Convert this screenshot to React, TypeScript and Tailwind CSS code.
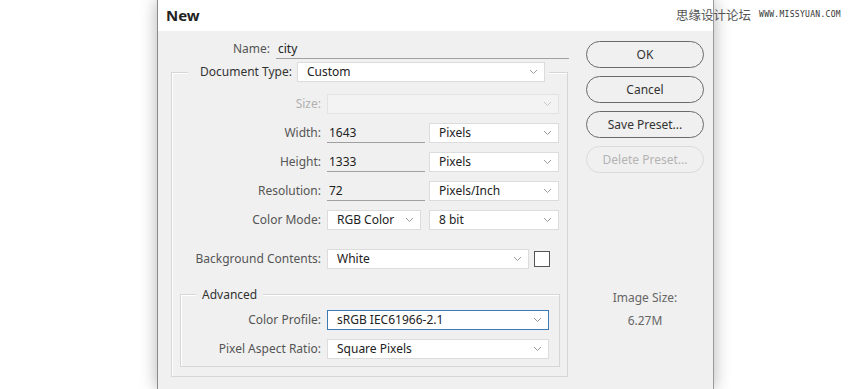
import React from "react";

const FONT = { fontFamily: '"Noto Sans", "Open Sans", sans-serif' };

function Chevron({ disabled }: { disabled?: boolean }) {
  return (
    <svg width="9" height="6" viewBox="0 0 9 6" className="shrink-0">
      <polyline points="1,1 4.5,4.5 8,1" fill="none" stroke={disabled ? "#c8c8c8" : "#9a9a9a"} strokeWidth="1" />
    </svg>
  );
}

function Select({ w, value, disabled, focus }: { w: string; value?: string; disabled?: boolean; focus?: boolean }) {
  return (
    <div
      className={`${w} h-[20px] flex items-center justify-between pl-[9px] pr-[6px] border ${
        focus ? "border-[#3d7ab3] bg-white" : disabled ? "border-[#e2e2e2] bg-[#f3f3f3]" : "border-[#dcdcdc] bg-white"
      } text-[12px] text-[#222]`}
    >
      <span>{value ?? ""}</span>
      <Chevron disabled={disabled} />
    </div>
  );
}

function Label({ children, w = "w-[163px]", disabled }: { children: React.ReactNode; w?: string; disabled?: boolean }) {
  return (
    <div className={`${w} shrink-0 text-right pr-[6px] text-[12px] ${disabled ? "text-[#b0b0b0]" : "text-[#555]"}`}>{children}</div>
  );
}

function Underline({ w, value }: { w: string; value: string }) {
  return (
    <div className={`${w} h-[20px] flex items-center pl-[2px] border-b border-[#a0a0a0] text-[12px] text-[#222]`}>{value}</div>
  );
}

function Btn({ children, disabled }: { children: React.ReactNode; disabled?: boolean }) {
  return (
    <div
      className={`w-[118px] h-[27px] rounded-full border flex items-center justify-center text-[12px] ${
        disabled ? "border-[#dadada] text-[#b4b4b4]" : "border-[#6a6a6a] text-[#333]"
      }`}
    >
      {children}
    </div>
  );
}

export default function App() {
  return (
    <div className="relative w-[850px] h-[389px] bg-white overflow-hidden" style={FONT}>
      <div className="ml-[157px] w-[557px] h-[389px] border-l border-r border-l-[#8a8a8a] border-r-[#9a9a9a] shadow-[0_0_16px_rgba(0,0,0,0.3)] flex flex-col">
        <div className="h-[31px] bg-white flex items-center pl-[8px] text-[15px] font-bold text-[#222]">New</div>
        <div className="flex-1 bg-[#f0f0f0] flex">
          {/* left column */}
          <div className="w-[412px] pt-[8px]">
            <div className="flex items-center h-[20px]">
              <Label w="w-[118px]">Name:</Label>
              <Underline w="w-[293px]" value="city" />
            </div>
            <div className="mt-[13px] ml-[13px] w-[397px] h-[305px] border border-[#d6d6d6] shadow-[inset_1px_1px_0_#ffffff]">
              <div className="-mt-[11px] flex items-center h-[20px]">
                <div className="w-[16px]" />
                <div className="bg-[#f0f0f0] flex items-center h-[20px] pl-[12px] pr-[4px]">
                  <div className="text-[12px] text-[#333] pr-[5px]">Document Type:</div>
                  <Select w="w-[248px]" value="Custom" />
                </div>
              </div>
              <div className="mt-[12px] flex items-center h-[20px]">
                <Label w="w-[155px]" disabled>Size:</Label>
                <Select w="w-[232px]" disabled />
              </div>
              <div className="mt-[9px] flex items-center h-[20px]">
                <Label w="w-[155px]">Width:</Label>
                <Underline w="w-[98px]" value="1643" />
                <div className="w-[4px]" />
                <Select w="w-[130px]" value="Pixels" />
              </div>
              <div className="mt-[9px] flex items-center h-[20px]">
                <Label w="w-[155px]">Height:</Label>
                <Underline w="w-[98px]" value="1333" />
                <div className="w-[4px]" />
                <Select w="w-[130px]" value="Pixels" />
              </div>
              <div className="mt-[9px] flex items-center h-[20px]">
                <Label w="w-[155px]">Resolution:</Label>
                <Underline w="w-[98px]" value="72" />
                <div className="w-[4px]" />
                <Select w="w-[130px]" value="Pixels/Inch" />
              </div>
              <div className="mt-[9px] flex items-center h-[20px]">
                <Label w="w-[155px]">Color Mode:</Label>
                <Select w="w-[94px]" value="RGB Color" />
                <div className="w-[8px]" />
                <Select w="w-[130px]" value="8 bit" />
              </div>
              <div className="mt-[19px] flex items-center h-[20px]">
                <Label w="w-[155px]">Background Contents:</Label>
                <Select w="w-[202px]" value="White" />
                <div className="w-[5px]" />
                <div className="w-[16px] h-[16px] bg-white border border-[#555]" />
              </div>
              <div className="mt-[25px] ml-[8px] w-[380px] h-[73px] border border-[#d6d6d6] shadow-[inset_1px_1px_0_#ffffff]">
                <div className="-mt-[10px] flex">
                  <div className="w-[15px]" />
                  <div className="bg-[#f0f0f0] px-[6px] h-[20px] flex items-center text-[12px] text-[#333]">Advanced</div>
                </div>
                <div className="mt-[5px] flex items-center h-[20px]">
                  <Label w="w-[146px]">Color Profile:</Label>
                  <Select w="w-[222px]" value="sRGB IEC61966-2.1" focus />
                </div>
                <div className="mt-[9px] flex items-center h-[20px]">
                  <Label w="w-[146px]">Pixel Aspect Ratio:</Label>
                  <Select w="w-[222px]" value="Square Pixels" />
                </div>
              </div>
            </div>
          </div>
          {/* right column */}
          <div className="w-[143px] pt-[10px] pl-[16px] flex flex-col">
            <div className="flex flex-col gap-[8px]">
              <Btn>OK</Btn>
              <Btn>Cancel</Btn>
              <Btn>Save Preset...</Btn>
              <Btn disabled>Delete Preset...</Btn>
            </div>
            <div className="mt-[116px] w-[118px] text-center text-[12px] text-[#666]">Image Size:</div>
            <div className="mt-[5px] w-[118px] text-center text-[12px] text-[#666]">6.27M</div>
          </div>
        </div>
      </div>
      <div className="absolute top-[6px] left-[676px] flex items-center">
        <span className="text-[12.5px] text-[#555]" style={{ fontFamily: '"Noto Sans CJK SC", sans-serif' }}>思缘设计论坛</span>
        <span className="ml-[8px] text-[8px] text-[#333] tracking-[0.3px]" style={{ fontFamily: '"DejaVu Sans Mono", monospace' }}>WWW.MISSYUAN.COM</span>
      </div>
    </div>
  );
}
